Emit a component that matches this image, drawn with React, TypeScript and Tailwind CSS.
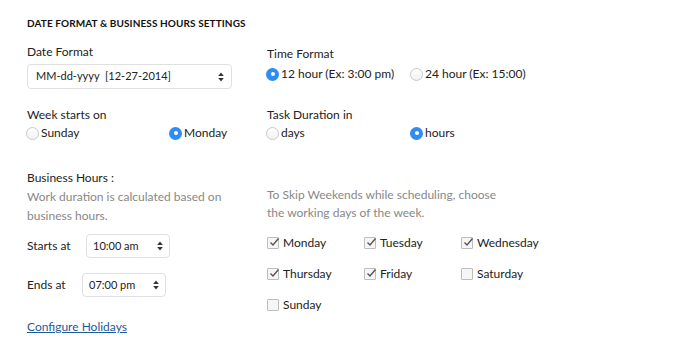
import React from "react";

const font = { fontFamily: "Lato, 'Open Sans', sans-serif" };

function Arrows() {
  return (
    <svg width="6" height="10" viewBox="0 0 6 10" className="shrink-0">
      <path d="M3 0.5 L5.8 4 L0.2 4 Z" fill="#333" />
      <path d="M3 9.5 L5.8 6 L0.2 6 Z" fill="#333" />
    </svg>
  );
}

function Radio({ checked, label }: { checked?: boolean; label: string }) {
  return (
    <div className="flex items-center h-[18px] gap-[2px]">
      {checked ? (
        <span className="w-[13px] h-[13px] rounded-full bg-[#2e8cf2] flex items-center justify-center">
          <span className="w-[4px] h-[4px] rounded-full bg-white" />
        </span>
      ) : (
        <span className="w-[13px] h-[13px] rounded-full border border-[#c9c9c9] bg-gradient-to-b from-white to-[#f2f2f2]" />
      )}
      <span className="text-[12px] text-[#222]">{label}</span>
    </div>
  );
}

function Check({ checked, label }: { checked?: boolean; label: string }) {
  return (
    <div className="flex items-center h-[18px] gap-[4px]">
      <span className="w-[12px] h-[12px] border border-[#bdbdbd] bg-[#f6f6f6] rounded-[1px] relative flex items-center justify-center">
        {checked && (
          <svg width="12" height="12" viewBox="0 0 12 12" className="absolute -top-[2px] left-[0px]">
            <path d="M2.5 6.5 L5 9 L10.5 2.5" stroke="#555" strokeWidth="1.4" fill="none" />
          </svg>
        )}
      </span>
      <span className="text-[12px] text-[#222]">{label}</span>
    </div>
  );
}

export default function App() {
  return (
    <div className="w-[680px] h-[350px] bg-white overflow-hidden pl-[27px] pt-[14px]" style={font}>
      <div className="h-[18px] leading-[18px] text-[10px] font-bold text-[#111] tracking-[0.1px]">
        DATE FORMAT &amp; BUSINESS HOURS SETTINGS
      </div>
      <div className="flex">
        {/* Left column */}
        <div className="w-[240px] flex flex-col">
          <div className="mt-[11px] h-[18px] leading-[18px] text-[12px] text-[#222]">Date Format</div>
          <div className="mt-[3px] w-[205px] h-[25px] border border-[#e0e0e0] rounded-[4px] flex items-center justify-between pl-[8px] pr-[7px]">
            <span className="text-[11px] text-[#222] whitespace-pre">MM-dd-yyyy  [12-27-2014]</span>
            <Arrows />
          </div>
          <div className="mt-[17px] h-[18px] leading-[18px] text-[12px] text-[#222]">Week starts on</div>
          <div className="grid grid-cols-[143px_100px] -ml-[1px]">
            <Radio label="Sunday" />
            <Radio checked label="Monday" />
          </div>
          <div className="mt-[27px] h-[18px] leading-[18px] text-[12px] text-[#222]">Business Hours :</div>
          <div className="text-[12px] leading-[19px] text-[#888]">
            Work duration is calculated based on
            <br />
            business hours.
          </div>
          <div className="mt-[9px] flex items-center">
            <span className="w-[59px] text-[12px] text-[#222]">Starts at</span>
            <div className="w-[84px] h-[24px] border border-[#e0e0e0] rounded-[4px] flex items-center justify-between pl-[6px] pr-[6px]">
              <span className="text-[11px] text-[#222]">10:00 am</span>
              <Arrows />
            </div>
          </div>
          <div className="mt-[15px] flex items-center">
            <span className="w-[55px] text-[12px] text-[#222]">Ends at</span>
            <div className="w-[84px] h-[24px] border border-[#e0e0e0] rounded-[4px] flex items-center justify-between pl-[6px] pr-[6px]">
              <span className="text-[11px] text-[#222]">07:00 pm</span>
              <Arrows />
            </div>
          </div>
          <a href="#" className="mt-[21px] h-[18px] leading-[18px] text-[12px] text-[#1d5a9c] underline w-fit">
            Configure Holidays
          </a>
        </div>
        {/* Right column */}
        <div className="flex flex-col">
          <div className="mt-[13px] h-[18px] leading-[18px] text-[12px] text-[#222]">Time Format</div>
          <div className="mt-[2px] grid grid-cols-[144px_160px] -ml-[1px]">
            <Radio checked label="12 hour (Ex: 3:00 pm)" />
            <Radio label="24 hour (Ex: 15:00)" />
          </div>
          <div className="mt-[23px] h-[18px] leading-[18px] text-[12px] text-[#222]">Task Duration in</div>
          <div className="grid grid-cols-[144px_100px] -ml-[1px]">
            <Radio label="days" />
            <Radio checked label="hours" />
          </div>
          <div className="mt-[44px] text-[12px] leading-[18px] text-[#888]">
            To Skip Weekends while scheduling, choose
            <br />
            the working days of the week.
          </div>
          <div className="mt-[12px] grid grid-cols-[97px_97px_110px] gap-y-[13px]">
            <Check checked label="Monday" />
            <Check checked label="Tuesday" />
            <Check checked label="Wednesday" />
            <Check checked label="Thursday" />
            <Check checked label="Friday" />
            <Check label="Saturday" />
            <Check label="Sunday" />
          </div>
        </div>
      </div>
    </div>
  );
}
